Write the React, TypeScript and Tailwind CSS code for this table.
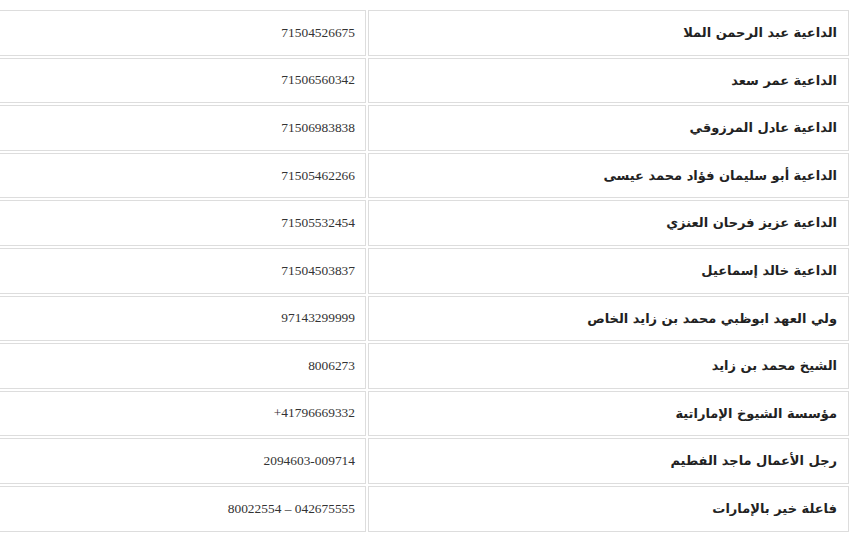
import React from 'react';

const rows: [string, string][] = [
  ['الداعية عبد الرحمن الملا', '71504526675'],
  ['الداعية عمر سعد', '71506560342'],
  ['الداعية عادل المرزوقي', '71506983838'],
  ['الداعية أبو سليمان فؤاد محمد عيسى', '71505462266'],
  ['الداعية عزيز فرحان العنزي', '71505532454'],
  ['الداعية خالد إسماعيل', '71504503837'],
  ['ولي العهد ابوظبي محمد بن زايد الخاص', '97143299999'],
  ['الشيخ محمد بن زايد', '8006273'],
  ['مؤسسة الشيوخ الإماراتية', '+41796669332'],
  ['رجل الأعمال ماجد الفطيم', '2094603-009714'],
  ['فاعلة خير بالإمارات', '80022554 – 042675555'],
];

export default function App() {
  return (
    <div className="w-[866px] h-[554px] overflow-hidden bg-white">
      {/* جدول الأرقام */}
      <div className="-ml-[4px] mr-[15px] mt-[8px]" dir="rtl">
        <table className="w-full border-separate border-spacing-[2px]">
          <tbody>
            {rows.map(([name, phone]) => (
              <tr key={name}>
                <td className="w-[481px] h-[45.6px] border border-[#dddddd] pr-[11px] text-right align-middle font-['DejaVu_Sans',sans-serif] font-bold text-[13px] text-[#222]">
                  {name}
                </td>
                <td
                  dir="ltr"
                  className="h-[45.6px] border border-[#dddddd] pr-[10px] text-right align-middle font-['Liberation_Serif',serif] text-[13.4px] text-[#333]"
                >
                  {phone}
                </td>
              </tr>
            ))}
          </tbody>
        </table>
      </div>
    </div>
  );
}
